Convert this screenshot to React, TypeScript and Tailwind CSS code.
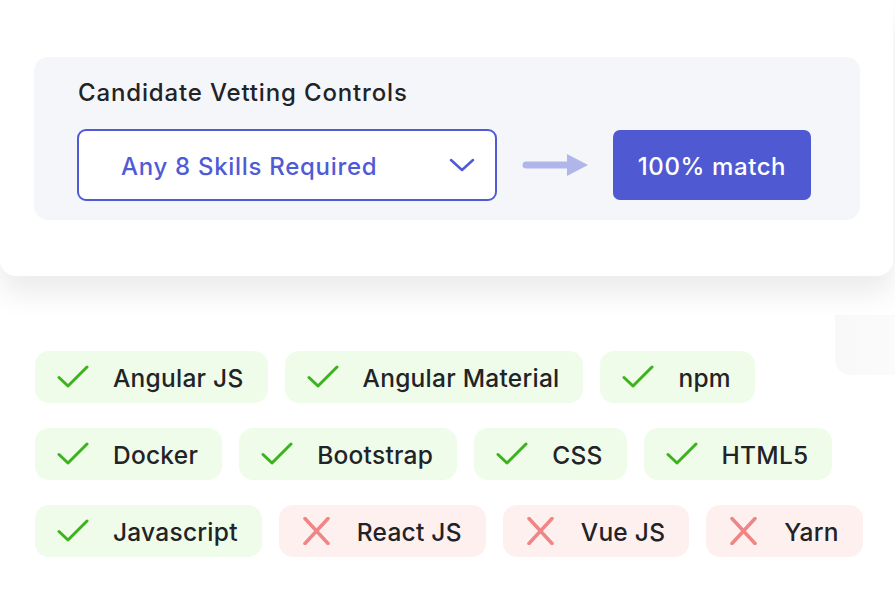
import React from 'react';

type Skill = { name: string; ok: boolean };

const ROWS: Skill[][] = [
    [
        { name: 'Angular JS', ok: true },
        { name: 'Angular Material', ok: true },
        { name: 'npm', ok: true },
    ],
    [
        { name: 'Docker', ok: true },
        { name: 'Bootstrap', ok: true },
        { name: 'CSS', ok: true },
        { name: 'HTML5', ok: true },
    ],
    [
        { name: 'Javascript', ok: true },
        { name: 'React JS', ok: false },
        { name: 'Vue JS', ok: false },
        { name: 'Yarn', ok: false },
    ],
];

function CheckIcon() {
    return (
        <svg width="32" height="24" viewBox="0 0 32 24" fill="none">
            <path
                d="M2 12.5 L11 21 L30 2"
                stroke="#3bb31c"
                strokeWidth="3"
                strokeLinecap="round"
                strokeLinejoin="round"
            />
        </svg>
    );
}

function CrossIcon() {
    return (
        <svg width="32" height="28" viewBox="0 0 32 28" fill="none">
            <path
                d="M4 1.5 L27 26.5 M27 1.5 L4 26.5"
                stroke="#f08585"
                strokeWidth="3.5"
                strokeLinecap="round"
            />
        </svg>
    );
}

function SkillChip({ skill }: { skill: Skill }) {
    return (
        <div
            className={
                'flex h-[52px] items-center gap-[24px] rounded-[14px] pl-[22px] pr-[24px] ' +
                (skill.ok ? 'bg-[#effcea]' : 'bg-[#fff0f0]')
            }
        >
            {skill.ok ? <CheckIcon /> : <CrossIcon />}
            <span className="pt-[2px] text-[24.5px] font-medium leading-none tracking-[0.25px] text-[#222326]">
                {skill.name}
            </span>
        </div>
    );
}

export default function App() {
    return (
        <div
            className="relative h-[591px] w-[895px] overflow-hidden bg-white"
            style={{ fontFamily: 'Inter, "Noto Sans", sans-serif' }}
        >
            {/* top card */}
            <div className="relative z-10 h-[276px] w-[893px] rounded-b-[16px] bg-white pt-[57px] pl-[34px] shadow-[0_18px_28px_rgba(0,0,0,0.08)]">
                <div className="h-[163px] w-[826px] rounded-[14px] bg-[#f5f6fa] pl-[43px] pt-[21px]">
                    <div className="ml-[1px] text-[24px] font-medium leading-[30px] tracking-[0.85px] text-[#222326]">
                        Candidate Vetting Controls
                    </div>
                    <div className="mt-[21px] flex items-center">
                        <div className="flex h-[72px] w-[420px] items-center justify-between rounded-[9px] border-[2.5px] border-[#4f5bd5] bg-white pl-[42px] pr-[20px]">
                            <span className="pt-[4px] text-[24px] font-medium tracking-[0.7px] text-[#4f5bd5]">
                                Any 8 Skills Required
                            </span>
                            <svg width="26" height="16" viewBox="0 0 26 16" fill="none">
                                <path
                                    d="M2 3 L13 13 L24 3"
                                    stroke="#4f5bd5"
                                    strokeWidth="2.5"
                                    strokeLinecap="round"
                                    strokeLinejoin="round"
                                />
                            </svg>
                        </div>
                        <svg
                            className="ml-[25px]"
                            width="67"
                            height="24"
                            viewBox="0 0 67 24"
                            fill="none"
                        >
                            <path
                                d="M4 12 H50"
                                stroke="#b1b6ea"
                                strokeWidth="7"
                                strokeLinecap="round"
                            />
                            <path d="M45 1 L66 12 L45 23 Z" fill="#b1b6ea" />
                        </svg>
                        <div className="ml-[24px] flex h-[70px] w-[198px] items-center justify-center rounded-[7px] bg-[#4f5ad2] pt-[4px] text-[24px] font-medium tracking-[0.6px] text-white">
                            100% match
                        </div>
                    </div>
                </div>
            </div>

            {/* bottom card */}
            <div className="absolute top-[315px] left-0 h-[276px] w-[893px] rounded-br-[16px] bg-white">
                <div className="absolute top-0 right-[-2px] h-[60px] w-[60px] rounded-bl-[16px] bg-gradient-to-r from-[#f8f8f8] to-[#fbfbfb]" />
                <div className="flex flex-col gap-[25px] pt-[36px] pl-[35px]">
                    {ROWS.map((row, i) => (
                        <div key={i} className="flex gap-[17px]">
                            {row.map((s) => (
                                <SkillChip key={s.name} skill={s} />
                            ))}
                        </div>
                    ))}
                </div>
            </div>
        </div>
    );
}
